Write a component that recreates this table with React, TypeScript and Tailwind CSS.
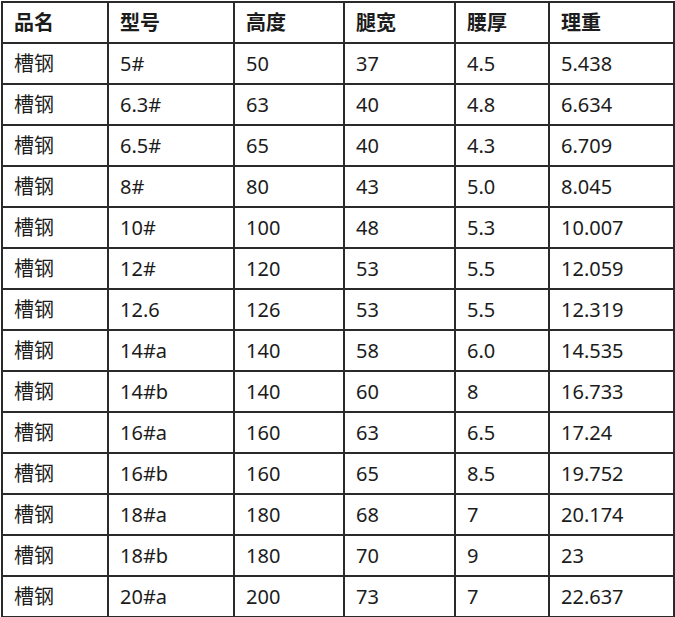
import React from "react";

const headers = ["品名", "型号", "高度", "腿宽", "腰厚", "理重"];

const rows: string[][] = [
  ["槽钢", "5#", "50", "37", "4.5", "5.438"],
  ["槽钢", "6.3#", "63", "40", "4.8", "6.634"],
  ["槽钢", "6.5#", "65", "40", "4.3", "6.709"],
  ["槽钢", "8#", "80", "43", "5.0", "8.045"],
  ["槽钢", "10#", "100", "48", "5.3", "10.007"],
  ["槽钢", "12#", "120", "53", "5.5", "12.059"],
  ["槽钢", "12.6", "126", "53", "5.5", "12.319"],
  ["槽钢", "14#a", "140", "58", "6.0", "14.535"],
  ["槽钢", "14#b", "140", "60", "8", "16.733"],
  ["槽钢", "16#a", "160", "63", "6.5", "17.24"],
  ["槽钢", "16#b", "160", "65", "8.5", "19.752"],
  ["槽钢", "18#a", "180", "68", "7", "20.174"],
  ["槽钢", "18#b", "180", "70", "9", "23"],
  ["槽钢", "20#a", "200", "73", "7", "22.637"],
];

export default function App() {
  return (
    <div className="bg-white w-[675px] h-[617px] pl-[1px] pt-[1px] text-[#1c1c1c] font-['Noto_Sans','Noto_Sans_CJK_SC',sans-serif]">
      <table className="table-fixed border-collapse w-[672px] text-[20px] leading-none">
        <colgroup>
          <col className="w-[106px]" />
          <col className="w-[126px]" />
          <col className="w-[110px]" />
          <col className="w-[111px]" />
          <col className="w-[94px]" />
          <col className="w-[125px]" />
        </colgroup>
        <thead>
          <tr className="h-[41px]">
            {headers.map((h) => (
              <th
                key={h}
                className="border-2 border-[#2a2a2a] text-left font-bold pl-[11px]"
              >
                {h}
              </th>
            ))}
          </tr>
        </thead>
        <tbody>
          {rows.map((r, i) => (
            <tr key={i} className="h-[41px]">
              {r.map((c, j) => (
                <td key={j} className="border-2 border-[#2a2a2a] pl-[11px]">
                  {c}
                </td>
              ))}
            </tr>
          ))}
        </tbody>
      </table>
    </div>
  );
}
